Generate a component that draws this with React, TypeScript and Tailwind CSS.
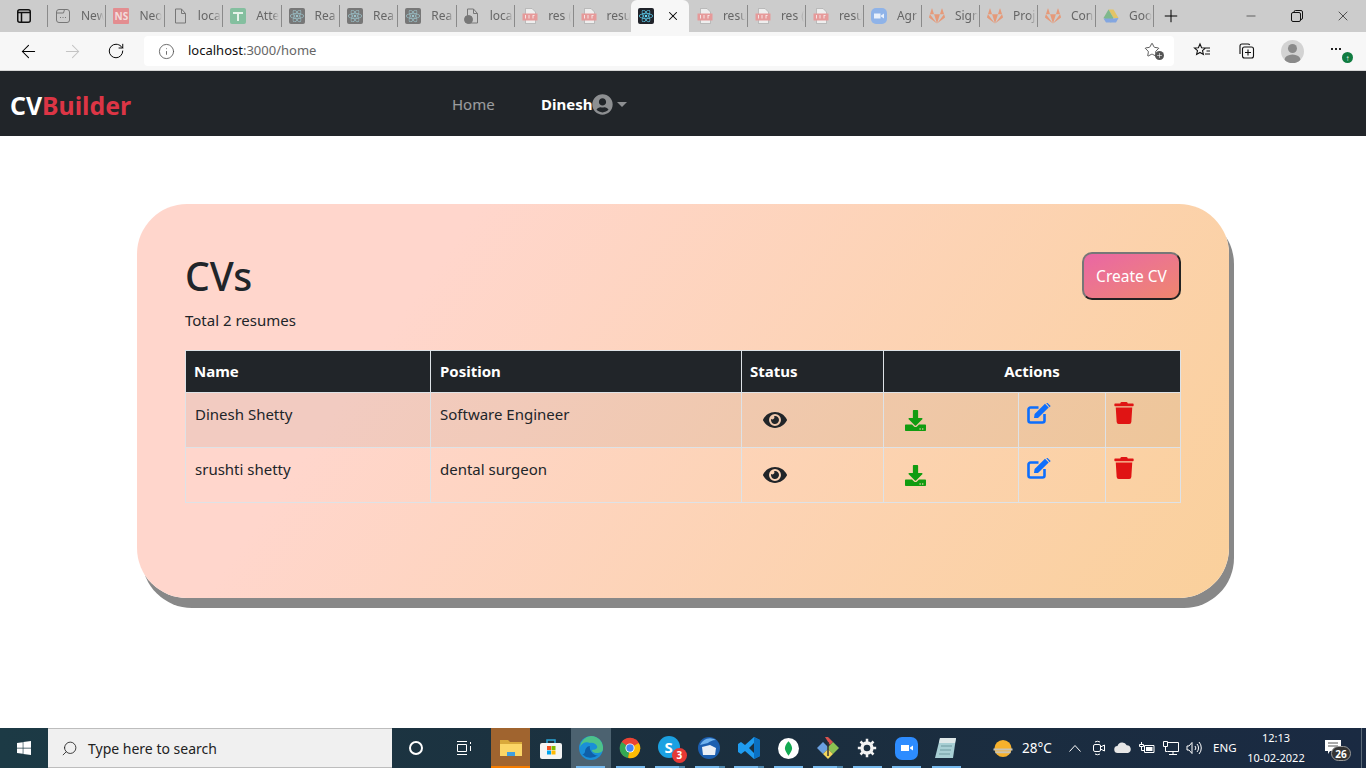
import { ArrowLeft, ArrowRight, Info, Minus, Plus, RotateCw, Search, Star, X } from "lucide-react";
import { FaDownload, FaEye, FaGitlab, FaReact, FaTrash, FaUserCircle, FaWindows } from "react-icons/fa";

type TabKind = "blank" | "ns" | "page" | "sheet" | "react" | "offline" | "pdf" | "zoom" | "gitlab" | "drive";

const TABS: { kind: TabKind; label: string; active?: boolean }[] = [
  { kind: "blank", label: "New" },
  { kind: "ns", label: "Neo" },
  { kind: "page", label: "loca" },
  { kind: "sheet", label: "Atte" },
  { kind: "react", label: "Rea" },
  { kind: "react", label: "Rea" },
  { kind: "react", label: "Rea" },
  { kind: "offline", label: "loca" },
  { kind: "pdf", label: "res (" },
  { kind: "pdf", label: "resu" },
  { kind: "react", label: "", active: true },
  { kind: "pdf", label: "resu" },
  { kind: "pdf", label: "res (" },
  { kind: "pdf", label: "resu" },
  { kind: "zoom", label: "Agr" },
  { kind: "gitlab", label: "Sign" },
  { kind: "gitlab", label: "Proj" },
  { kind: "gitlab", label: "Con" },
  { kind: "drive", label: "Goo" },
];

const RESUMES = [
  { name: "Dinesh Shetty", position: "Software Engineer", striped: true },
  { name: "srushti shetty", position: "dental surgeon", striped: false },
];

function Favicon({ kind, active }: { kind: TabKind; active?: boolean }) {
  if (kind === "react") {
    return (
      <span className={`flex h-4 w-4 items-center justify-center rounded-[2px] ${active ? "bg-[#20232a] text-[#61dafb]" : "bg-[#777] text-[#9cc4cc]"}`}>
        <FaReact size={14} />
      </span>
    );
  }
  if (kind === "ns") {
    return (
      <span className="flex h-4 w-4 items-center justify-center rounded-[1px] bg-[#e38d90] text-[10px] font-bold leading-none text-[#f3dcdc]">
        NS
      </span>
    );
  }
  if (kind === "sheet") {
    return (
      <span className="flex h-4 w-4 items-center justify-center rounded-[2px] bg-[#84bf9f]">
        <svg viewBox="0 0 16 16" className="h-4 w-4">
          <path d="M3 4h10v2H9v7H7V6H3z" fill="#e6f2ea" />
        </svg>
      </span>
    );
  }
  if (kind === "blank") {
    return (
      <svg viewBox="0 0 16 16" className="h-4 w-4" fill="none" stroke="#777" strokeWidth="1">
        <rect x="1.5" y="1.5" width="13" height="13" rx="2.5" />
        <path d="M1.5 5h7l1-3.5" />
        <path d="M5 9.500h1M7.500 9.500h1M10 9.500h1" strokeWidth="1.200" />
      </svg>
    );
  }
  if (kind === "page" || kind === "offline") {
    return (
      <svg viewBox="0 0 16 16" className="h-4 w-4" fill="none" stroke="#777" strokeWidth="1">
        <path d="M3.500 1h6l4 4.500V15h-10z" />
        <path d="M9.500 1v4.500h4" />
        {kind === "offline" && <circle cx="4.500" cy="11.500" r="4" fill="#777" />}
      </svg>
    );
  }
  if (kind === "pdf") {
    return (
      <svg viewBox="0 0 16 16" className="h-4 w-4">
        <path d="M3.500 .5h6.500l3.500 3.500v11.500h-10z" fill="#eee" stroke="#aaa" strokeWidth=".7" />
        <rect x="0.500" y="5.500" width="15" height="7" fill="#e69a9a" />
        <path d="M3 7h1v3.500h-1zM6.500 7h1v3.500h-1zM10.500 7h2v1h-2zM10.500 7h1v3.500h-1z" fill="#f6e4e4" />
      </svg>
    );
  }
  if (kind === "zoom") {
    return (
      <span className="flex h-4 w-4 items-center justify-center rounded-[5px] bg-[#8fb3e8]">
        <svg viewBox="0 0 16 16" className="h-4 w-4">
          <path d="M3 5.500h6.500v5H3zM10 7.500l3-2v5l-3-2z" fill="#e8f0fb" />
        </svg>
      </span>
    );
  }
  if (kind === "gitlab") {
    return <FaGitlab size={16} className="text-[#e59a7a]" />;
  }
  return (
    <svg viewBox="0 0 16 16" className="h-4 w-4">
      <path d="M5.500 1.500h5l5 8.500h-5z" fill="#e3c466" />
      <path d="M5.500 1.500l5 8.500-2.500 4.500-7.500-4.500z" fill="#7fb88c" />
      <path d="M0.500 10.500h10l5-.5-2.500 4.500H3z" fill="#83a6e0" />
    </svg>
  );
}

function Tab({ kind, label, active, index }: { kind: TabKind; label: string; active?: boolean; index: number }) {
  if (active) {
    return (
      <div className="flex h-[32px] w-[58px] shrink-0 items-center gap-[12px] rounded-t-[6px] bg-[#f7f7f7] pl-[7px]">
        <Favicon kind={kind} active />
        <X size={14} strokeWidth={1.800} className="text-black" />
      </div>
    );
  }
  return (
    <div className={`flex h-[32px] shrink-0 items-center ${index < 10 ? "w-[58.4px]" : "w-[58px]"}`}>
      <span className={`h-[22px] w-px shrink-0 ${index === 11 ? "bg-transparent" : "bg-[#8a8a8a]"}`} />
      <div className="flex items-center gap-[10px] pl-[7px]">
        <Favicon kind={kind} />
        <span className="w-[23px] overflow-hidden whitespace-nowrap text-[12px] text-[#666] [mask-image:linear-gradient(to_right,black_70%,transparent)]">
          {label}
        </span>
      </div>
    </div>
  );
}

function BrowserChrome() {
  return (
    <header className="shrink-0">
      <div className="flex h-[32px] items-start bg-[#cccccc]">
        <div className="flex h-[32px] w-[47px] shrink-0 items-center pl-[17px]">
          <svg viewBox="0 0 14 14" className="h-[14px] w-[14px]" fill="none" stroke="#111" strokeWidth="1.500">
            <rect x="0.750" y="0.750" width="12.500" height="12.500" rx="2" />
            <path d="M0.750 3.500h12.500M4.500 3.500v9.500" />
          </svg>
        </div>
        {TABS.map((tab, index) => (
          <Tab key={index} index={index} {...tab} />
        ))}
        <span className="mt-[5px] h-[22px] w-px shrink-0 bg-[#8a8a8a]" />
        <Plus size={20} strokeWidth={1.200} className="ml-[7px] mt-[6px] shrink-0 text-black" />
        <div className="ml-auto flex h-[32px] items-center text-[#111]">
          <span className="flex w-[46px] justify-center">
            <Minus size={14} strokeWidth={1} />
          </span>
          <span className="flex w-[46px] justify-center">
            <svg viewBox="0 0 12 12" className="h-[12px] w-[12px]" fill="none" stroke="#111">
              <rect x="0.500" y="2.500" width="9" height="9" rx="1.500" />
              <path d="M3 2.500v-.5a1.500 1.500 0 0 1 1.500-1.500h5.500a1.500 1.500 0 0 1 1.500 1.500v6a1.500 1.500 0 0 1-1.500 1.500h-.5" />
            </svg>
          </span>
          <span className="flex w-[46px] justify-center">
            <X size={16} strokeWidth={1} />
          </span>
        </div>
      </div>
      <div className="flex h-[39px] items-center border-b border-[#d6d6d6] bg-[#f7f7f7]">
        <div className="flex w-[144px] shrink-0 items-center pl-[18px] text-black">
          <ArrowLeft size={21} strokeWidth={1.200} />
          <ArrowRight size={21} strokeWidth={1.200} className="ml-[23px] text-[#c4c4c4]" />
          <RotateCw size={18} strokeWidth={1.300} className="ml-[24px]" />
        </div>
        <div className="flex h-[30px] w-[1030px] shrink-0 items-center rounded-[4px] bg-white pl-[14px] pr-[10px]">
          <Info size={17} strokeWidth={1.200} className="text-[#555]" />
          <span className="ml-[13px] text-[13px] text-[#111]">
            localhost<span className="text-[#666]">:3000/home</span>
          </span>
          <span className="relative ml-auto h-[18px] w-[20px]">
            <Star size={16} strokeWidth={1.100} className="text-[#222]" />
            <span className="absolute bottom-0 right-0 flex h-[9px] w-[9px] items-center justify-center rounded-full bg-[#555]">
              <Plus size={7} strokeWidth={2} className="text-white" />
            </span>
          </span>
        </div>
        <div className="flex flex-1 items-center pl-[19px]">
          <svg viewBox="0 0 18 18" className="h-[18px] w-[18px]" fill="none" stroke="#111" strokeWidth="1.100">
            <path d="M7 2l1.600 3.700 3.900.3-3 2.600.9 3.900L7 10.500l-3.400 2 .9-3.900-3-2.600 3.900-.3zM13 6h4M13.500 9h3.500M12 12h5" />
          </svg>
          <svg viewBox="0 0 18 18" className="ml-[26px] h-[18px] w-[18px]" fill="none" stroke="#111" strokeWidth="1.100">
            <path d="M3 12V4a2 2 0 0 1 2-2h6a2 2 0 0 1 1.700 1" />
            <path d="M5.500 7a2 2 0 0 1 2-2h7a2 2 0 0 1 2 2v7a2 2 0 0 1-2 2h-7a2 2 0 0 1-2-2z" />
            <path d="M11 7.500v6M8 10.500h6" />
          </svg>
          <span className="ml-[26px] flex h-[23px] w-[23px] items-center justify-center overflow-hidden rounded-full bg-[#d3d3d3]">
            <svg viewBox="0 0 23 23" className="h-[23px] w-[23px]">
              <circle cx="11.500" cy="8.500" r="4.500" fill="#8a8a8a" />
              <ellipse cx="11.500" cy="20" rx="8" ry="5.500" fill="#8a8a8a" />
            </svg>
          </span>
          <span className="relative ml-[27px] h-[18px] w-[22px]">
            <span className="absolute left-0 top-[6px] flex gap-[2px]">
              <span className="h-[2px] w-[2px] bg-[#222]" />
              <span className="h-[2px] w-[2px] bg-[#222]" />
              <span className="h-[2px] w-[2px] bg-[#222]" />
            </span>
            <span className="absolute bottom-[-3px] right-[0px] flex h-[11px] w-[11px] items-center justify-center rounded-full bg-[#107c41] text-[8px] font-bold leading-none text-white">
              ↑
            </span>
          </span>
        </div>
      </div>
    </header>
  );
}

function Navbar() {
  return (
    <nav className="flex h-[65px] shrink-0 items-center bg-[#212529] pl-[10px] pt-[1px]">
      <span className="w-[442px] shrink-0 pt-[2px] text-[24.800px] font-bold leading-none text-white">
        CV<span className="text-[#dc3545]">Builder</span>
      </span>
      <span className="w-[89px] shrink-0 text-[15px] text-white/55">Home</span>
      <span className="flex items-center text-[15px] font-bold text-white">
        Dinesh
        <FaUserCircle size={21} className="text-[#8d8f91]" />
        <span className="ml-[4px] h-0 w-0 border-x-[5px] border-t-[5px] border-x-transparent border-t-[#8d8f91]" />
      </span>
    </nav>
  );
}

function EditIcon() {
  return (
    <svg viewBox="0 0 24 21" className="h-[21px] w-[24px]">
      <path d="M17.500 11v6.500a2 2 0 0 1-2 2h-12a2 2 0 0 1-2-2v-11a2 2 0 0 1 2-2h8" fill="none" stroke="#0d6efd" strokeWidth="2.600" />
      <path d="M7 15l.6-4L18 .8l3.700 3.700L11 15zM19.200 0l1.300-.0 3.200 3.100-1.200 1.200z" fill="#0d6efd" />
    </svg>
  );
}

function ResumeTable() {
  const cell = "border border-[#dee2e6] align-top";
  const head = "border border-[#dee2e6] border-b-0 bg-[#212529] px-[8px] text-[15px] font-bold text-white";
  return (
    <table className="w-[995px] table-fixed border-collapse text-[15px] text-[#212529]">
      <colgroup>
        <col className="w-[245px]" />
        <col className="w-[311px]" />
        <col className="w-[142px]" />
        <col className="w-[135px]" />
        <col className="w-[87px]" />
        <col className="w-[75px]" />
      </colgroup>
      <thead>
        <tr className="h-[42px]">
          <th className={`${head} text-left`}>Name</th>
          <th className={`${head} pl-[9px] text-left`}>Position</th>
          <th className={`${head} text-left`}>Status</th>
          <th colSpan={3} className={`${head} text-center`}>
            Actions
          </th>
        </tr>
      </thead>
      <tbody>
        {RESUMES.map((resume) => (
          <tr key={resume.name} className={`h-[55px] ${resume.striped ? "bg-black/5" : ""}`}>
            <td className={`${cell} pl-[9px] pt-[10px]`}>{resume.name}</td>
            <td className={`${cell} pl-[9px] pt-[10px]`}>{resume.position}</td>
            <td className={`${cell} pl-[21px] pt-[15px]`}>
              <FaEye size={24} className="text-[#212529]" />
            </td>
            <td className={`${cell} pl-[21px] pt-[17px]`}>
              <FaDownload size={21} className="text-[#119c11]" />
            </td>
            <td className={`${cell} pl-[8px] pt-[10px]`}>
              <EditIcon />
            </td>
            <td className={`${cell} pl-[8px] pt-[9px]`}>
              <FaTrash size={22} className="-ml-px text-[#e01414]" />
            </td>
          </tr>
        ))}
      </tbody>
    </table>
  );
}

function Cloud() {
  return (
    <svg viewBox="0 0 18 12" className="h-[12px] w-[18px]">
      <path d="M4 11a3.500 3.500 0 0 1-.5-7 5 5 0 0 1 9.200-.8A4 4 0 0 1 14 11z" fill="#e6e6e6" />
    </svg>
  );
}

function TaskIcon({ highlight, split, children }: { highlight?: string; split?: boolean; children: React.ReactNode }) {
  return (
    <div className={`relative flex h-[40px] w-[39.500px] shrink-0 items-center justify-center ${highlight ?? ""}`}>
      {children}
      <span className={`absolute bottom-0 left-[5px] h-[2px] bg-[#76b9ed] ${split ? "w-[24px]" : "w-[29px]"}`} />
      {split && <span className="absolute bottom-0 left-[29px] h-[2px] w-[6px] bg-[#4d86ad]" />}
    </div>
  );
}

function TrayItem({ width, children }: { width: string; children: React.ReactNode }) {
  return <div className={`flex shrink-0 justify-center ${width}`}>{children}</div>;
}

function Taskbar() {
  return (
    <footer className="flex h-[40px] shrink-0 items-center bg-gradient-to-r from-[#1c3a45] via-[#1b2f3e] to-[#1a2a42] text-white">
      <div className="flex w-[48px] shrink-0 justify-center">
        <FaWindows size={16} />
      </div>
      <div className="flex h-[40px] w-[344px] shrink-0 items-center border-y border-[#bdbdbd] bg-[#f0f0f0] pl-[13px] text-[#222]">
        <Search size={17} strokeWidth={1.200} className="-scale-x-100" />
        <span className="ml-[10px] text-[14px]">Type here to search</span>
      </div>
      <div className="flex w-[48px] shrink-0 justify-center">
        <span className="h-[14px] w-[14px] rounded-full border-2 border-white" />
      </div>
      <div className="flex w-[48px] shrink-0 justify-center">
        <svg viewBox="0 0 16 14" className="h-[14px] w-[16px]" fill="none" stroke="#fff">
          <path d="M1 .5h10M1 13.500h10M1.500 3.500h9v7h-9zM14.500 1v2M14.500 5v5" />
        </svg>
      </div>
      <div className="ml-[3px] flex shrink-0 items-center">
        <div className="relative flex h-[40px] w-[39px] items-center justify-center bg-[#a0642f]">
          <svg viewBox="0 0 22 20" className="h-[20px] w-[22px]">
            <path d="M0 2h8l2 2h12v14H0z" fill="#d9a93b" />
            <path d="M0 6h22v12H0z" fill="#fbd667" />
            <path d="M7 14h8v4H7z" fill="#3f9fe0" />
          </svg>
          <span className="absolute bottom-0 left-0 h-[2px] w-full bg-[#f47c00]" />
        </div>
        <div className="flex h-[40px] w-[41px] items-center justify-center">
          <svg viewBox="0 0 24 24" className="h-[24px] w-[24px]">
            <path d="M8 7V4h8v3" fill="none" stroke="#2aa5d8" strokeWidth="1.500" />
            <rect x="1" y="7" width="22" height="16" rx="2" fill="#f4f4f4" />
            <path d="M8 10h4v4H8z" fill="#f25022" />
            <path d="M12.500 10h4v4h-4z" fill="#7fba00" />
            <path d="M8 14.500h4v4H8z" fill="#00a4ef" />
            <path d="M12.500 14.500h4v4h-4z" fill="#ffb900" />
          </svg>
        </div>
        <TaskIcon highlight="bg-[#4c6270]">
          <svg viewBox="0 0 24 24" className="h-[24px] w-[24px]">
            <circle cx="12" cy="12" r="12" fill="#1a8fd8" />
            <path d="M12 0a12 12 0 0 1 12 13c0 3-3 4-6 4-4 0-5-2-5-3 3 0 6-1 5-4-1-2-4-4-7-3C7 5 3 7 1 11A12 12 0 0 1 12 0z" fill="#4dc28a" />
            <path d="M6 16c0-3 2-6 5-6-1 3 1 7 5 9 1 .5 2 .5 3 .3A12 12 0 0 1 3 18c1 .5 2 0 3-2z" fill="#0f5fa8" />
          </svg>
        </TaskIcon>
        <TaskIcon>
          <svg viewBox="0 0 24 24" className="h-[22px] w-[22px]">
            <circle cx="12" cy="12" r="11" fill="#ea4335" />
            <path d="M12 12L21.500 6.500A11 11 0 0 0 3 5.500z" fill="#ea4335" />
            <path d="M12 12L3 5.500A11 11 0 0 0 10 23z" fill="#34a853" />
            <path d="M12 12l-2 11A11 11 0 0 0 21.500 6.500z" fill="#fbbc05" />
            <circle cx="12" cy="12" r="5" fill="#fff" />
            <circle cx="12" cy="12" r="4" fill="#4285f4" />
          </svg>
        </TaskIcon>
        <TaskIcon split>
          <span className="relative block h-[24px] w-[24px]">
            <span className="flex h-[22px] w-[22px] items-center justify-center rounded-full bg-[#1ba1e2] text-[15px] font-bold text-white">S</span>
            <span className="absolute -bottom-[3px] -right-[5px] flex h-[15px] w-[15px] items-center justify-center rounded-full bg-[#e53935] text-[10px] font-bold text-white">3</span>
          </span>
        </TaskIcon>
        <TaskIcon split>
          <svg viewBox="0 0 24 24" className="h-[24px] w-[24px]">
            <circle cx="12" cy="12" r="11" fill="#1c5fb0" />
            <path d="M3 9a11 11 0 0 1 16-5c-4 0-7 2-8 3z" fill="#6fb2ee" />
            <path d="M5 11l8-2 6 3-1 7H6z" fill="#e9eef5" />
          </svg>
        </TaskIcon>
        <TaskIcon split>
          <svg viewBox="0 0 24 24" className="h-[24px] w-[24px]">
            <path d="M17 1l6 3v16l-6 3-9-8-4 3-3-2V8l3-2 4 3zM17 7l-5 5 5 5z" fill="#1f9cf0" />
            <path d="M17 1l6 3v16l-6 3z" fill="#0a70c2" />
          </svg>
        </TaskIcon>
        <TaskIcon>
          <span className="flex h-[21px] w-[21px] items-center justify-center rounded-full bg-white">
            <svg viewBox="0 0 10 16" className="h-[15px] w-[9px]">
              <path d="M5 0c3 3 4 6 4 8s-2 5-4 8c-2-3-4-6-4-8s1-5 4-8z" fill="#13aa52" />
            </svg>
          </span>
        </TaskIcon>
        <TaskIcon split>
          <svg viewBox="0 0 24 24" className="h-[24px] w-[24px]">
            <path d="M7 6l6 6-6 6-6-6z" fill="#6aa0e0" />
            <path d="M17 6l6 6-6 6-6-6z" fill="#8cc152" />
            <path d="M12 13l5 5-5 5-5-5z" fill="#f2d65c" />
            <path d="M9 1l3 0 5 5-3 3z" fill="#d9534f" />
            <path d="M12 6v14" stroke="#333" strokeWidth="1.500" />
          </svg>
        </TaskIcon>
        <TaskIcon>
          <svg viewBox="0 0 24 24" className="h-[20px] w-[20px]" fill="none" stroke="#f2f2f2" strokeWidth="4">
            <circle cx="12" cy="12" r="6" />
            <path d="M12 1v4M12 19v4M1 12h4M19 12h4M4.200 4.200l2.800 2.800M17 17l2.800 2.800M4.200 19.800L7 17M17 7l2.800-2.800" strokeWidth="3" />
          </svg>
        </TaskIcon>
        <TaskIcon>
          <span className="flex h-[23px] w-[23px] items-center justify-center rounded-[7px] bg-[#2d8cff]">
            <svg viewBox="0 0 16 16" className="h-[16px] w-[16px]">
              <path d="M2 5h8v6H2zM11 7.500l3-2v5l-3-2z" fill="#fff" />
            </svg>
          </span>
        </TaskIcon>
        <TaskIcon>
          <svg viewBox="0 0 24 24" className="h-[24px] w-[24px]">
            <path d="M6 2h16l-3 20H1z" fill="#a8cfd4" />
            <path d="M6 2h16l-1 5H5z" fill="#dfe8e8" />
            <path d="M7 10h11M6 14h11M5 18h11" stroke="#6f9aa0" />
          </svg>
        </TaskIcon>
      </div>
      <div className="ml-auto flex items-center">
        <div className="w-[30px] shrink-0">
          <svg viewBox="0 0 22 22" className="h-[21px] w-[22px]">
            <circle cx="11" cy="11" r="9" fill="#f6b12c" />
            <path d="M1 12h20M3 15h16" stroke="#c9c4b5" strokeWidth="2" />
          </svg>
        </div>
        <span className="w-[41px] shrink-0 text-[13.500px]">28°C</span>
        <TrayItem width="w-[24px]">
          <svg viewBox="0 0 12 7" className="h-[7px] w-[12px]" fill="none" stroke="#fff">
            <path d="M.5 6.500l5.500-6 5.500 6" />
          </svg>
        </TrayItem>
        <TrayItem width="w-[24px]">
          <svg viewBox="0 0 12 16" className="h-[16px] w-[12px]" fill="none" stroke="#fff">
            <rect x=".5" y="4.500" width="7" height="7" rx="1.500" />
            <path d="M7.500 7l4-2v6l-4-2M2 2a5 5 0 0 1 5 0M2 14a5 5 0 0 0 5 0" />
          </svg>
        </TrayItem>
        <TrayItem width="w-[24px]">
          <Cloud />
        </TrayItem>
        <TrayItem width="w-[24px]">
          <svg viewBox="0 0 16 12" className="h-[12px] w-[16px]" fill="none" stroke="#fff">
            <path d="M5.500 3.500h9.500v7H5.500z" />
            <path d="M7 5h6.500v4H7z" fill="#fff" stroke="none" />
            <path d="M2.500 0v2.500M.5 2.500h4v2h-4zM2.500 4.500v4h3" />
          </svg>
        </TrayItem>
        <TrayItem width="w-[24px]">
          <svg viewBox="0 0 16 14" className="h-[14px] w-[16px]" fill="none" stroke="#fff">
            <path d="M4.500 1.500h11v9h-11M.5 .5h4v5h-4zM2.500 5.500v5h2M10 10.500v3M6 13.500h8" />
          </svg>
        </TrayItem>
        <TrayItem width="w-[22px]">
          <svg viewBox="0 0 16 14" className="h-[14px] w-[16px]" fill="none" stroke="#fff">
            <path d="M1 5h2l3-3.500v11L3 9H1zM9 5a3 3 0 0 1 0 4M11 3a6 6 0 0 1 0 8M13 1a9 9 0 0 1 0 12" />
          </svg>
        </TrayItem>
        <span className="ml-[8px] w-[31px] shrink-0 text-[11.500px]">ENG</span>
        <div className="flex w-[64px] shrink-0 flex-col items-center whitespace-nowrap text-[11px] leading-[20px]">
          <span>12:13</span>
          <span>10-02-2022</span>
        </div>
        <div className="relative h-[40px] w-[53px] shrink-0">
          <svg viewBox="0 0 16 14" className="absolute left-[17px] top-[12px] h-[14px] w-[16px]">
            <path d="M0 0h16v11H5l-2 3v-3H0z" fill="#fff" />
            <path d="M3 3h10M3 6h10" stroke="#555" />
          </svg>
          <span className="absolute left-[23px] top-[18px] flex h-[15px] w-[20px] items-center justify-center rounded-full border border-[#999] bg-[#333] text-[10px] font-bold leading-none">
            26
          </span>
        </div>
        <span className="h-[40px] w-px bg-[#5b6a78]" />
        <span className="w-[4px]" />
      </div>
    </footer>
  );
}

export default function App() {
  return (
    <div className="flex h-[768px] flex-col overflow-hidden bg-white font-['Noto_Sans',sans-serif]">
      <BrowserChrome />
      <Navbar />
      <main className="flex-1 pl-[137px] pt-[68px]">
        <section className="h-[394px] w-[1092px] rounded-[50px] bg-[linear-gradient(125deg,#ffd6cc_25%,#fad09b_100%)] px-[48px] pt-[46px] shadow-[5px_10px_0_#888888]">
          <div className="flex items-start justify-between">
            <div>
              <h1 className="text-[39px] font-medium leading-[52px] text-[#212529]">CVs</h1>
              <p className="mt-[6px] text-[15px] leading-[24px] text-[#212529]">Total 2 resumes</p>
            </div>
            <button
              type="button"
              className="mt-[2px] h-[48px] w-[99px] rounded-[10px] border-2 border-b-[#222] border-l-[#777] border-r-[#222] border-t-[#777] bg-gradient-to-br from-[#ea66a4] to-[#ef866d] pt-[1px] text-[15.500px] text-white"
            >
              Create CV
            </button>
          </div>
          <div className="mt-[18px]">
            <ResumeTable />
          </div>
        </section>
      </main>
      <Taskbar />
    </div>
  );
}
